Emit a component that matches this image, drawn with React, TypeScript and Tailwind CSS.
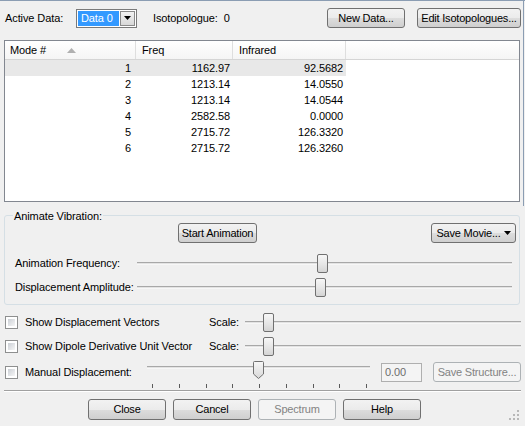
import React from 'react'

const font = { fontFamily: '"Liberation Sans", Arial, sans-serif' }

const rows = [
  { mode: '1', freq: '1162.97', ir: '92.5682' },
  { mode: '2', freq: '1213.14', ir: '14.0550' },
  { mode: '3', freq: '1213.14', ir: '14.0544' },
  { mode: '4', freq: '2582.58', ir: '0.0000' },
  { mode: '5', freq: '2715.72', ir: '126.3320' },
  { mode: '6', freq: '2715.72', ir: '126.3260' },
]

function Button({
  children,
  className = '',
  disabled = false,
}: {
  children: React.ReactNode
  className?: string
  disabled?: boolean
}) {
  return (
    <button
      className={`flex items-center justify-center rounded-[3px] border text-[11px] tracking-[-0.2px] ${
        disabled
          ? 'border-[#adb2b5] bg-[#f4f4f4] text-[#838383]'
          : 'border-[#707070] bg-[linear-gradient(#f2f2f2_0%,#ebebeb_50%,#dddddd_50%,#cfcfcf_100%)] text-black'
      } ${className}`}
    >
      {children}
    </button>
  )
}

function Thumb({ left }: { left: number }) {
  return (
    <div
      className="absolute top-0 h-[19px] w-[11px] rounded-[2px] border border-[#707070] bg-[linear-gradient(#f7f7f7,#e4e4e4_60%,#d4d4d4)]"
      style={{ left }}
    />
  )
}

function Slider({ width, thumb }: { width: number; thumb: number }) {
  return (
    <div className="relative h-[19px]" style={{ width }}>
      <div className="absolute left-0 right-0 top-[8px] h-[3px] border-t border-[#a8a8a8] border-b border-b-[#f7f7f7] bg-[#e3e3e3]" />
      <Thumb left={thumb} />
    </div>
  )
}

function Checkbox() {
  return (
    <div className="h-[13px] w-[13px] border border-[#8e8f8f] bg-white p-[2px]">
      <div className="h-full w-full bg-[linear-gradient(135deg,#cbcfd5,#f6f6f6)]" />
    </div>
  )
}

export default function App() {
  return (
    <div
      className="relative h-[426px] w-[525px] overflow-hidden border-t border-[#8b9db3] bg-[#f0f0f0] px-[4px] text-black"
      style={font}
    >
      <div className="absolute right-[1px] top-0 h-[205px] w-px bg-[#8b9db3]" />

      {/* top bar */}
      <div className="mt-[7px] flex h-[20px] items-center text-[11px] tracking-[-0.1px]">
        <span className="ml-[1px] w-[71px]">Active Data:</span>
        <div className="flex h-[19px] w-[61px] items-center border border-[#7a7a7a] bg-white p-[1px]">
          <div className="flex h-full flex-1 items-center bg-[#3399ff] pl-[3px] text-white">Data 0</div>
          <div className="ml-[1px] flex h-full w-[15px] items-center justify-center border border-[#8a8a8a] bg-[linear-gradient(#f2f2f2,#d8d8d8)]">
            <svg width="7" height="4" viewBox="0 0 7 4">
              <path d="M0 0h7L3.5 4z" fill="#000" />
            </svg>
          </div>
        </div>
        <span className="ml-[16px]">Isotopologue:&nbsp; 0</span>
        <Button className="ml-auto h-[20px] w-[78px]">New Data...</Button>
        <Button className="ml-[12px] h-[20px] w-[104px]">Edit Isotopologues...</Button>
      </div>

      {/* table */}
      <div className="mt-[12px] h-[162px] w-[516px] border border-[#828790] bg-white text-[11px] tracking-[-0.1px]">
        <div className="flex h-[19px] border-b border-[#d5d5d5] bg-[linear-gradient(#ffffff,#f5f5f5)]">
          <div className="flex w-[131px] items-center border-r border-[#dedede] pl-[5px]">
            Mode #
            <svg className="ml-[21px]" width="9" height="5" viewBox="0 0 9 5">
              <path d="M0 5L4.5 0L9 5z" fill="#b0b0b0" />
            </svg>
          </div>
          <div className="flex w-[97px] items-center border-r border-[#dedede] pl-[6px]">Freq</div>
          <div className="flex w-[113px] items-center border-r border-[#dedede] pl-[6px]">Infrared</div>
          <div className="flex-1" />
        </div>
        {rows.map((r, i) => (
          <div key={r.mode} className={`flex h-[16px] w-[341px] items-center ${i === 0 ? 'bg-[#e8e8e8]' : ''}`}>
            <div className="w-[131px] pr-[5px] text-right">{r.mode}</div>
            <div className="w-[97px] pr-[3px] text-right">{r.freq}</div>
            <div className="w-[113px] pr-[3px] text-right">{r.ir}</div>
          </div>
        ))}
      </div>

      {/* animate vibration group */}
      <div className="relative mt-[13px] h-[90px] w-[516px] rounded-[3px] border border-[#d5dfe5] text-[11px] tracking-[-0.1px]">
        <span className="absolute -top-[8px] left-[8px] bg-[#f0f0f0] px-[1px]">Animate Vibration:</span>
        <div className="mt-[7px] flex h-[20px]">
          <Button className="ml-[173px] h-[20px] w-[79px]">Start Animation</Button>
          <Button className="ml-auto mr-[3px] h-[20px] w-[85px] gap-[3px]">
            Save Movie...
            <svg width="7" height="4" viewBox="0 0 7 4">
              <path d="M0 0h7L3.5 4z" fill="#000" />
            </svg>
          </Button>
        </div>
        <div className="mt-[11px] flex h-[19px] items-center">
          <span className="w-[132px] pl-[10px]">Animation Frequency:</span>
          <Slider width={375} thumb={180} />
        </div>
        <div className="mt-[5px] flex h-[19px] items-center">
          <span className="w-[132px] pl-[10px]">Displacement Amplitude:</span>
          <Slider width={375} thumb={178} />
        </div>
      </div>

      {/* options */}
      <div className="text-[11px] tracking-[-0.1px]">
        <div className="mt-[7px] flex h-[20px] items-center">
          <div className="ml-[1px]"><Checkbox /></div>
          <span className="ml-[7px] w-[184px]">Show Displacement Vectors</span>
          <span className="w-[36px]">Scale:</span>
          <Slider width={276} thumb={18} />
        </div>
        <div className="mt-[4px] flex h-[20px] items-center">
          <div className="ml-[1px]"><Checkbox /></div>
          <span className="ml-[7px] w-[184px] whitespace-nowrap">Show Dipole Derivative Unit Vector</span>
          <span className="w-[36px]">Scale:</span>
          <Slider width={276} thumb={18} />
        </div>
        <div className="mt-[6px] flex h-[20px] items-center">
          <div className="ml-[1px]"><Checkbox /></div>
          <span className="ml-[7px] w-[122px]">Manual Displacement:</span>
          <div className="-mt-[2px] flex w-[223px] flex-col self-start">
            <div className="relative h-[20px]">
              <div className="absolute left-0 right-0 top-[6px] h-[3px] border-t border-[#a8a8a8] border-b border-b-[#f7f7f7] bg-[#e3e3e3]" />
              <svg className="absolute top-[1px]" style={{ left: 106 }} width="11" height="18" viewBox="0 0 11 18">
                <defs>
                  <linearGradient id="tg" x1="0" y1="0" x2="0" y2="1">
                    <stop offset="0" stopColor="#f7f7f7" />
                    <stop offset="1" stopColor="#d8d8d8" />
                  </linearGradient>
                </defs>
                <path d="M1.5 0.5h8a1 1 0 0 1 1 1V13L5.5 17.5L0.5 13V1.5a1 1 0 0 1 1-1z" fill="url(#tg)" stroke="#707070" />
              </svg>
            </div>
            <div className="mt-[4px] flex justify-between pl-[5px] pr-[3px]">
              {Array.from({ length: 9 }).map((_, i) => (
                <div key={i} className="h-[4px] w-px bg-[#5a5a5a]" />
              ))}
            </div>
          </div>
          <div className="ml-[11px] flex h-[19px] w-[41px] items-center border border-[#afafaf] bg-[#f4f4f4] pl-[3px] text-[#6d6d6d]">
            0.00
          </div>
          <Button disabled className="ml-[11px] h-[20px] w-[88px]">Save Structure...</Button>
        </div>
      </div>

      <div className="mt-[8px] h-px w-[517px] bg-[#a0a0a0]" />
      <div className="h-px w-[517px] bg-white" />

      {/* bottom buttons */}
      <div className="mt-[7px] flex gap-[7px] pl-[84px]">
        <Button className="h-[21px] w-[78px]">Close</Button>
        <Button className="h-[21px] w-[78px]">Cancel</Button>
        <Button disabled className="h-[21px] w-[78px]">Spectrum</Button>
        <Button className="h-[21px] w-[78px]">Help</Button>
      </div>

      {/* size grip */}
      <svg className="absolute bottom-[6px] right-[6px]" width="10" height="10" viewBox="0 0 10 10">
        {[
          [8, 0],
          [8, 4],
          [4, 4],
          [8, 8],
          [4, 8],
          [0, 8],
        ].map(([x, y], i) => (
          <rect key={i} x={x} y={y} width="2" height="2" fill="#b8b8b8" />
        ))}
      </svg>
    </div>
  )
}
